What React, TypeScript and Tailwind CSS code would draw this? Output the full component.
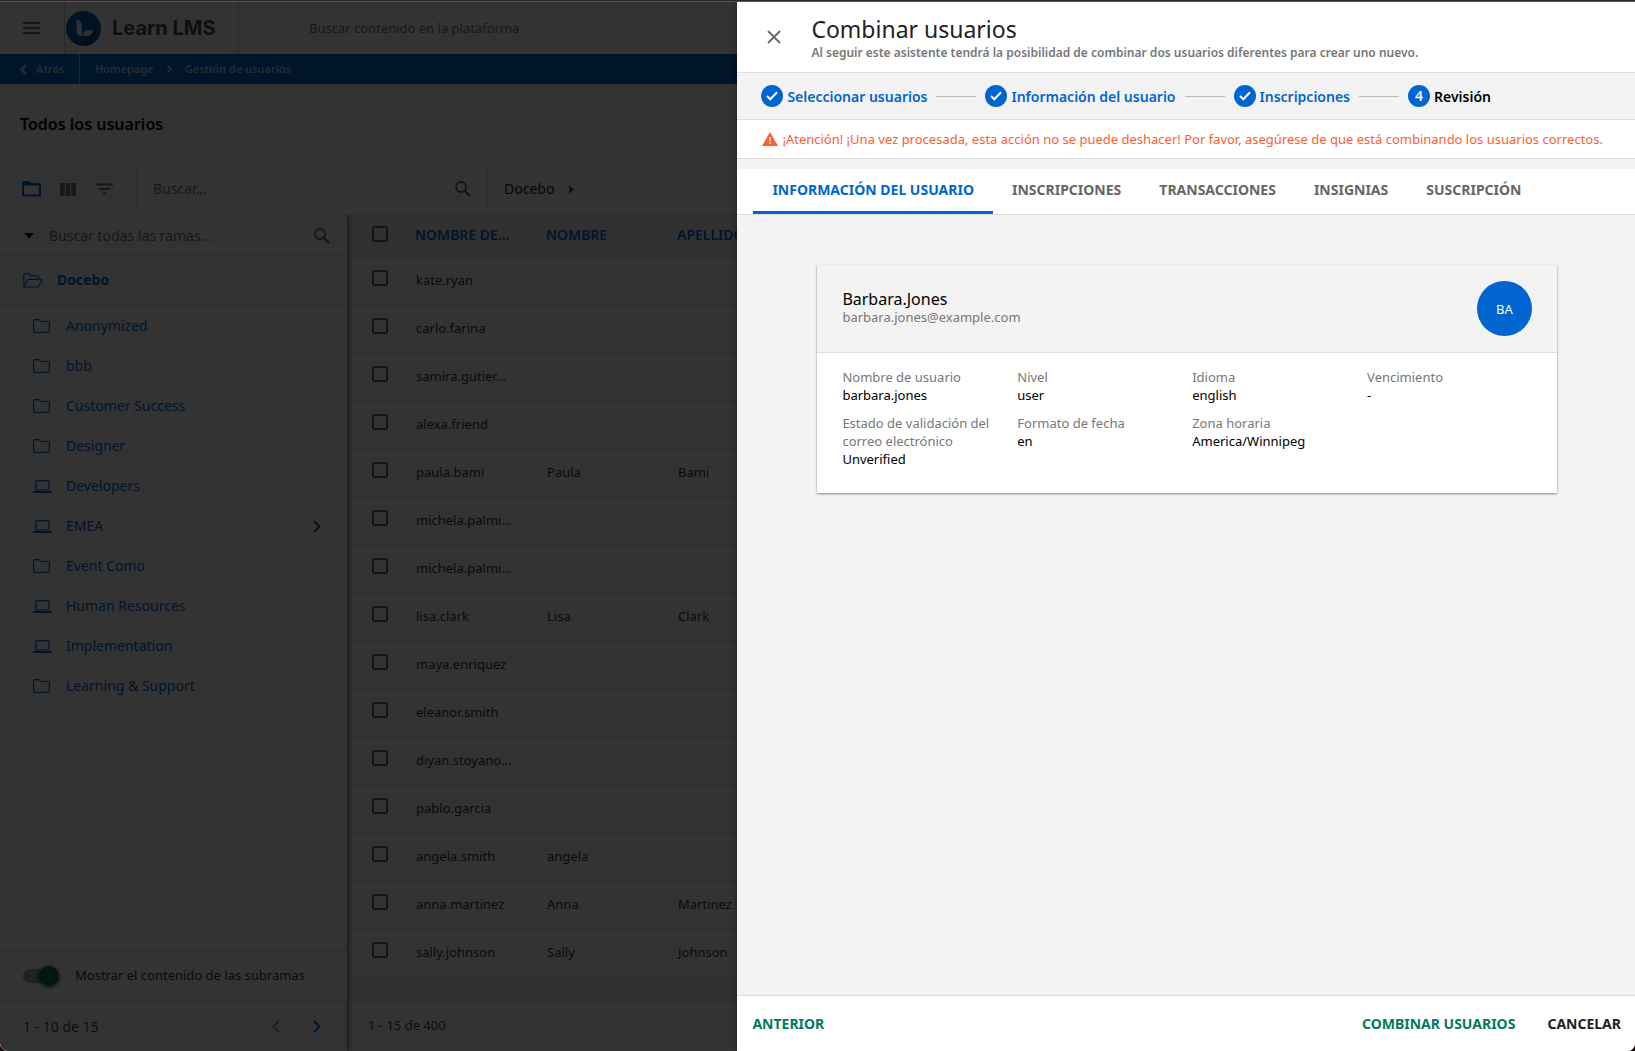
import React from "react";

const USERS: [string, string, string][] = [
  ["kate.ryan", "", ""],
  ["carlo.farina", "", ""],
  ["samira.gutier...", "", ""],
  ["alexa.friend", "", ""],
  ["paula.bami", "Paula", "Bami"],
  ["michela.palmi...", "", ""],
  ["michela.palmi...", "", ""],
  ["lisa.clark", "Lisa", "Clark"],
  ["maya.enriquez", "", ""],
  ["eleanor.smith", "", ""],
  ["diyan.stoyano...", "", ""],
  ["pablo.garcia", "", ""],
  ["angela.smith", "angela", ""],
  ["anna.martinez", "Anna", "Martinez"],
  ["sally.johnson", "Sally", "Johnson"],
];

const BRANCHES: { name: string; icon: "folder" | "laptop"; children?: boolean }[] = [
  { name: "Anonymized", icon: "folder" },
  { name: "bbb", icon: "folder" },
  { name: "Customer Success", icon: "folder" },
  { name: "Designer", icon: "folder" },
  { name: "Developers", icon: "laptop" },
  { name: "EMEA", icon: "laptop", children: true },
  { name: "Event Como", icon: "folder" },
  { name: "Human Resources", icon: "laptop" },
  { name: "Implementation", icon: "laptop" },
  { name: "Learning & Support", icon: "folder" },
];

const STEPS = ["Seleccionar usuarios", "Información del usuario", "Inscripciones"];

const TABS = ["INFORMACIÓN DEL USUARIO", "INSCRIPCIONES", "TRANSACCIONES", "INSIGNIAS", "SUSCRIPCIÓN"];

const DETAILS: [string, string][] = [
  ["Nombre de usuario", "barbara.jones"],
  ["Nivel", "user"],
  ["Idioma", "english"],
  ["Vencimiento", "-"],
  ["Estado de validación del correo electrónico", "Unverified"],
  ["Formato de fecha", "en"],
  ["Zona horaria", "America/Winnipeg"],
];

function FolderIcon() {
  return (
    <svg width="17" height="14" viewBox="0 0 17 14" fill="none" stroke="currentColor" strokeWidth="1.200">
      <path d="M.6 2A1.400 1.400 0 0 1 2 .6h3.600a1 1 0 0 1 .7.3L8 2.500h7A1.400 1.400 0 0 1 16.400 4v8A1.400 1.400 0 0 1 15 13.400H2A1.400 1.400 0 0 1 .6 12Z" />
    </svg>
  );
}

function LaptopIcon() {
  return (
    <svg width="19" height="13" viewBox="0 0 19 13" fill="none" stroke="currentColor" strokeWidth="1.200">
      <rect x="2.900" y=".6" width="13.200" height="9.400" rx="1.200" />
      <path d="M0 11h8l.5.500h2L11 11h8v.8a1.200 1.200 0 0 1-1.200 1.200H1.200A1.200 1.200 0 0 1 0 11.800Z" fill="currentColor" stroke="none" />
    </svg>
  );
}

function OpenFolderIcon() {
  return (
    <svg width="20" height="15" viewBox="0 0 20 15" fill="none" stroke="currentColor" strokeWidth="1.200">
      <path d="M.8 13V2A1.400 1.400 0 0 1 2.200.6h3.500a1 1 0 0 1 .7.3l1.700 1.700h6A1.400 1.400 0 0 1 15.500 4v2.300M1.200 13.600l3.400-6.300a2 2 0 0 1 1.700-1h12.100c.6 0 .9.500.6 1l-3.200 5.700a2 2 0 0 1-1.700 1H2c-.9 0-1.200-.4-1.200-1" strokeLinejoin="round" />
    </svg>
  );
}

function OutlineFolderIcon() {
  return (
    <svg width="19" height="16" viewBox="0 0 19 16" fill="currentColor">
      <path d="M2 0h5.500l2 2H17a2 2 0 0 1 2 2v9.500a2 2 0 0 1-2 2H2a2 2 0 0 1-2-2V2a2 2 0 0 1 2-2Zm0 4.500v8.500c0 .4.200.6.6.6h13.900c.4 0 .6-.2.6-.6V5c0-.4-.2-.6-.6-.6Z" fillRule="evenodd" />
    </svg>
  );
}

function ColumnsIcon() {
  return (
    <svg width="16" height="13" viewBox="0 0 16 13" fill="currentColor">
      <path d="M0 0h4.700v13H0zM5.700 0h4.600v13H5.700zM11.300 0H16v13h-4.700z" />
    </svg>
  );
}

function FilterIcon() {
  return (
    <svg width="17" height="12" viewBox="0 0 17 12" fill="currentColor">
      <path d="M0 .5h17v2H0zM3 5h11v2H3zM6.500 9.500h4v2h-4z" />
    </svg>
  );
}

function MenuIcon() {
  return (
    <svg width="17" height="12" viewBox="0 0 17 12" fill="currentColor">
      <path d="M0 0h17v2H0zM0 5h17v2H0zM0 10h17v2H0z" />
    </svg>
  );
}

function SearchIcon() {
  return (
    <svg width="16" height="16" viewBox="0 0 16 16" fill="none" stroke="currentColor" strokeWidth="1.800">
      <circle cx="6" cy="6" r="5" />
      <path d="m9.700 9.700 5.500 5.500" strokeWidth="2.200" />
    </svg>
  );
}

function Chevron({ left = false, width = 8, height = 13, stroke = 2 }: { left?: boolean; width?: number; height?: number; stroke?: number }) {
  return (
    <svg width={width} height={height} viewBox="0 0 8 13" fill="none" stroke="currentColor" strokeWidth={stroke}>
      <path d={left ? "M7 1 1.500 6.500 7 12" : "m1 1 5.500 5.500L1 12"} />
    </svg>
  );
}

function LogoIcon() {
  return (
    <svg width="35" height="35" viewBox="0 0 35 35">
      <circle cx="17.500" cy="17.500" r="17.500" fill="#005fb8" />
      <path d="M16 24 27 19l5.800 7.200A17.500 17.500 0 0 1 20 34.800l-5-9.300Z" fill="#064a86" />
      <path d="M10.500 8.500c3 .4 5.500 2.500 5.500 6V25c-3.300 0-5.500-2-5.500-5.200Z" fill="#e8f0f6" />
      <path d="M16.500 24.800c.3-3.300 2-5.600 5.500-5.600h5c-.4 3.400-2.600 5.600-6 5.600Z" fill="#e8f0f6" />
    </svg>
  );
}

function CheckBox({ label }: { label: string }) {
  return (
    <input
      type="checkbox"
      aria-label={label}
      className="block size-4 appearance-none rounded-[2px] border-2 border-[#666]"
    />
  );
}

function Sidebar() {
  return (
    <aside className="relative z-10 flex w-[347px] shrink-0 flex-col bg-white shadow-[2px_0_5px_rgba(0,0,0,0.5)]">
      <div className="flex h-[41px] items-center border-b border-[#e2e2e2] pt-px pr-[17px] pl-6">
        <svg width="10" height="6" viewBox="0 0 10 6" className="text-black">
          <path d="M0 0h10L5 5.500Z" fill="currentColor" />
        </svg>
        <input
          aria-label="Buscar todas las ramas"
          placeholder="Buscar todas las ramas..."
          className="ml-[15px] min-w-0 flex-1 text-sm placeholder:text-[#757575]"
        />
        <button aria-label="Buscar rama" className="text-[#666]"><SearchIcon /></button>
      </div>
      <a href="#docebo" className="flex h-[49px] items-center gap-3.5 border-b border-[#e2e2e2] pl-[23px] text-sm font-bold text-[#0065d1]">
        <OpenFolderIcon />
        Docebo
      </a>
      <nav className="flex flex-1 flex-col pt-px">
        {BRANCHES.map((b) => (
          <a key={b.name} href="#rama" className="flex h-10 items-center pr-[26px] pl-[33px] text-sm text-[#0065d1]">
            <span className="w-[33px]">{b.icon === "folder" ? <FolderIcon /> : <LaptopIcon />}</span>
            <span className="flex-1">{b.name}</span>
            {b.children && <Chevron stroke={2} />}
          </a>
        ))}
      </nav>
      <label className="flex h-[49px] items-center border-t border-[#e2e2e2] pl-[23px] text-[13px] text-[#333]">
        <input type="checkbox" defaultChecked className="peer sr-only" />
        <span className="mr-4 flex h-3.5 w-9 items-center justify-end rounded-full bg-[#80b98a]">
          <span className="size-5 shrink-0 rounded-full bg-[#007a56] shadow-[0_1px_4px_rgba(0,0,0,0.8)]" />
        </span>
        Mostrar el contenido de las subramas
      </label>
      <div className="flex h-[51px] items-center border-t border-[#e2e2e2] pr-[26px] pl-[23px] text-sm text-[#444]">
        <span className="flex-1 pt-0.5">1 - 10 de 15</span>
        <button aria-label="Página anterior" className="mr-[33px] text-[#6fa2c9]"><Chevron left stroke={2} /></button>
        <button aria-label="Página siguiente" className="text-[#0065d1]"><Chevron stroke={2} /></button>
      </div>
    </aside>
  );
}

function UsersTable() {
  return (
    <section className="flex min-w-0 flex-1 flex-col">
      <div className="flex-1 overflow-hidden bg-[#f3f3f3]">
        <table className="w-full table-fixed border-collapse text-left text-[13px] text-[#333]">
          <thead>
            <tr className="h-[41px] border-b border-[#e2e2e2] text-sm text-[#0065d1]">
              <th className="w-[68px] pb-0.5 pl-[25px]"><CheckBox label="Seleccionar todos" /></th>
              <th className="w-[131px] font-semibold">NOMBRE DE...</th>
              <th className="w-[131px] font-semibold">NOMBRE</th>
              <th className="font-semibold">APELLIDO</th>
            </tr>
          </thead>
          <tbody>
            {USERS.map(([user, first, last], i) => (
              <tr key={i} className="h-12 border-b border-[#e2e2e2] bg-white">
                <td className="pb-1 pl-[25px]"><CheckBox label={`Seleccionar ${user}`} /></td>
                <td className="pt-px pl-px">{user}</td>
                <td className="pt-px pl-px">{first}</td>
                <td className="pt-px pl-px">{last}</td>
              </tr>
            ))}
          </tbody>
        </table>
      </div>
      <div className="flex h-[51px] items-center border-t border-l border-[#e2e2e2] bg-white pl-5 text-[13px] text-[#444]">
        1 - 15 de 400
      </div>
    </section>
  );
}

function UsersPage() {
  return (
    <div className="flex h-full flex-col bg-white text-[#222]">
      <header className="flex h-[52px] shrink-0 items-center">
        <button aria-label="Menú" className="flex h-full w-16 items-center pl-[23px] text-[#777]"><MenuIcon /></button>
        <a href="#inicio" className="flex h-full w-[175px] items-center gap-[11px] border-x border-[#ccc] pl-px font-['Inter'] text-xl font-bold text-[#4c4c4c]">
          <LogoIcon />
          Learn LMS
        </a>
        <input
          aria-label="Buscar contenido"
          placeholder="Buscar contenido en la plataforma"
          className="ml-[54px] h-[37px] flex-1 border border-[#e6e6e6] px-[15px] text-[13px] placeholder:text-[#757575]"
        />
      </header>
      <nav className="flex h-[30px] shrink-0 items-center bg-[#0065d1] text-[11px] font-semibold text-white/75">
        <a href="#atras" className="flex h-full w-20 items-center gap-[9px] border-r border-white/60 pl-5">
          <Chevron left width={7} height={11} stroke={3} />
          Atrás
        </a>
        <a href="#home" className="ml-[15px]">Homepage</a>
        <span className="mx-[13px]"><Chevron width={5} height={8} stroke={3} /></span>
        <a href="#usuarios">Gestión de usuarios</a>
      </nav>
      <div className="flex h-20 shrink-0 items-center border-b border-[#e2e2e2] pl-5">
        <h2 className="text-base font-semibold text-black">Todos los usuarios</h2>
      </div>
      <div className="flex h-[51px] shrink-0 items-center border-b border-[#e2e2e2] text-sm">
        <div className="flex h-full w-[137px] items-center border-r border-[#e2e2e2] pl-[22px] text-[#777]">
          <button aria-label="Ramas" className="text-[#0065d1]"><OutlineFolderIcon /></button>
          <button aria-label="Columnas" className="ml-[19px]"><ColumnsIcon /></button>
          <button aria-label="Filtros" className="ml-5"><FilterIcon /></button>
        </div>
        <div className="flex h-full w-[351px] items-center border-r border-[#e2e2e2] pr-4 pl-4">
          <input aria-label="Buscar usuario" placeholder="Buscar..." className="min-w-0 flex-1 placeholder:text-[#757575]" />
          <button aria-label="Buscar" className="text-[#666]"><SearchIcon /></button>
        </div>
        <span className="ml-4">Docebo</span>
        <svg width="5" height="9" viewBox="0 0 5 9" className="ml-[15px] text-[#666]">
          <path d="M0 0v9l5-4.500Z" fill="currentColor" />
        </svg>
      </div>
      <div className="flex min-h-0 flex-1 overflow-hidden">
        <Sidebar />
        <UsersTable />
      </div>
    </div>
  );
}

function StepBadge({ children }: { children: React.ReactNode }) {
  return (
    <span className="flex size-[22px] items-center justify-center rounded-full bg-[#0065d1] text-sm font-semibold text-white">
      {children}
    </span>
  );
}

function MergeDrawer() {
  return (
    <div
      role="dialog"
      aria-label="Combinar usuarios"
      className="flex h-full w-[54.9%] flex-col bg-[#f3f3f3] text-[13px] leading-[18px] shadow-[0_0_6px_rgba(0,0,0,0.4)]"
    >
      <header className="flex h-[71px] shrink-0 items-center border-b border-[#ddd] bg-white pl-[30px]">
        <button aria-label="Cerrar" className="mr-[30px] text-[#666]">
          <svg width="14" height="14" viewBox="0 0 14 14" fill="none" stroke="currentColor" strokeWidth="1.800">
            <path d="m1 1 12 12M13 1 1 13" />
          </svg>
        </button>
        <div className="pt-[3px]">
          <h1 className="text-[23px] leading-7 text-[#222]">Combinar usuarios</h1>
          <p className="text-xs leading-5 font-semibold text-[#777]">
            Al seguir este asistente tendrá la posibilidad de combinar dos usuarios diferentes para crear uno nuevo.
          </p>
        </div>
      </header>

      <ol className="flex h-[47px] shrink-0 items-center border-b border-[#ddd] pl-6 text-sm font-semibold">
        {STEPS.map((step) => (
          <li key={step} className="flex items-center text-[#0065d1]">
            <StepBadge>
              <svg width="12" height="10" viewBox="0 0 12 10" fill="none" stroke="currentColor" strokeWidth="2">
                <path d="m1 5 3.300 3.300L11 1.300" />
              </svg>
            </StepBadge>
            <span className="ml-1 pt-0.5">{step}</span>
            <span className="mx-[9px] h-px w-10 bg-[#bbb]" />
          </li>
        ))}
        <li className="flex items-center text-black">
          <StepBadge>4</StepBadge>
          <span className="ml-1 pt-0.5">Revisión</span>
        </li>
      </ol>

      <div role="alert" className="flex h-[39px] shrink-0 items-center gap-1 border-b border-[#ddd] bg-white pl-[25px] whitespace-nowrap text-[#ff5e30]">
        <svg width="16" height="14" viewBox="0 0 16 14" className="shrink-0">
          <path d="m8 0 8 14H0Z" fill="currentColor" />
          <path d="M7.300 5h1.500v4H7.300zM7.300 10.200h1.500v1.500H7.300z" fill="#fff" />
        </svg>
        ¡Atención! ¡Una vez procesada, esta acción no se puede deshacer! Por favor, asegúrese de que está combinando los usuarios correctos.
      </div>

      <div role="tablist" className="mt-2.5 flex h-[46px] shrink-0 border-b border-[#ddd] bg-white pl-4 text-sm font-bold">
        {TABS.map((tab, i) => (
          <button
            key={tab}
            role="tab"
            aria-selected={i === 0}
            className={
              i === 0
                ? "border-b-[3px] border-[#0065d1] px-[19px] text-[#0065d1]"
                : "border-b-[3px] border-transparent px-[19px] text-[#666]"
            }
          >
            {tab}
          </button>
        ))}
      </div>

      <main className="flex-1 pt-[50px] pr-[78px] pl-20">
        <article className="bg-white shadow-[0_1px_2px_rgba(0,0,0,0.45)]">
          <header className="flex h-[88px] items-center justify-between border-b border-[#ddd] bg-[#f3f3f3] px-[25px]">
            <div className="pb-0.5">
              <h3 className="text-base leading-[18px] text-black">Barbara.Jones</h3>
              <p className="text-[#777]">barbara.jones@example.com</p>
            </div>
            <div className="flex size-[55px] items-center justify-center rounded-full bg-[#0065d1] text-white">BA</div>
          </header>
          <dl className="grid grid-cols-4 gap-y-2.5 px-5 pt-[15px] pb-[25px]">
            {DETAILS.map(([label, value]) => (
              <div key={label} className="px-[5px]">
                <dt className="text-[#777]">{label}</dt>
                <dd className="text-black">{value}</dd>
              </div>
            ))}
          </dl>
        </article>
      </main>

      <footer className="flex h-14 shrink-0 items-center gap-8 border-t border-[#ddd] bg-white pr-3.5 pl-[15px] text-sm font-bold">
        <button className="text-[#007a5e]">ANTERIOR</button>
        <button className="ml-auto text-[#007a5e]">COMBINAR USUARIOS</button>
        <button className="text-[#222]">CANCELAR</button>
      </footer>
    </div>
  );
}

export default function App() {
  return (
    <div className="flex h-screen flex-col overflow-hidden bg-[#1c0a10] font-['Noto_Sans',sans-serif]">
      <div className="h-0.5 shrink-0 border-b border-[#56525c] bg-[#2b272d]" />
      <div className="relative min-h-0 flex-1 overflow-hidden rounded-b-lg">
        <UsersPage />
        <div className="absolute inset-0 z-20 flex justify-end bg-black/80">
          <MergeDrawer />
        </div>
      </div>
    </div>
  );
}
